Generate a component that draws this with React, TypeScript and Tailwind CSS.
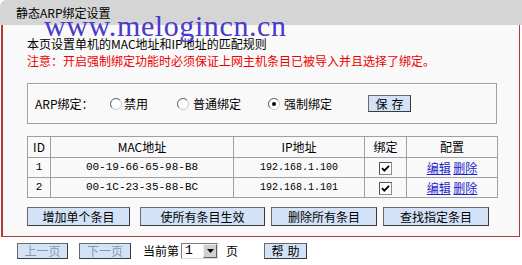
import React from 'react';

const cjk = "font-['Noto_Sans_CJK_SC',sans-serif]";

function Radio({ checked }: { checked?: boolean }) {
  return (
    <svg width="12" height="12" viewBox="0 0 12 12" className="shrink-0">
      <circle cx="6" cy="6" r="5.5" fill="#fff" stroke="#c8c8c8" />
      <path d="M2.1 9.9 A5.5 5.5 0 0 1 9.9 2.1" fill="none" stroke="#6a6a6a" />
      {checked && <circle cx="6" cy="6" r="2" fill="#000" />}
    </svg>
  );
}

function Check() {
  return (
    <svg width="13" height="13" viewBox="0 0 13 13" className="inline-block align-middle">
      <rect x="0.5" y="0.5" width="12" height="12" fill="#fff" stroke="#8c8c8c" />
      <path d="M0.5 12.5 V0.5 H12.5" fill="none" stroke="#555" />
      <path d="M3 6.2 L5.3 8.6 L10 3.8" fill="none" stroke="#000" strokeWidth="1.8" />
    </svg>
  );
}

function Btn({ children, className = '', disabled }: { children: React.ReactNode; className?: string; disabled?: boolean }) {
  return (
    <button
      className={`flex items-center justify-center bg-[#d4e2f7] border border-[#3a3a3a] border-l-[#6a6a6a] border-t-[#6a6a6a] text-[12px] leading-none ${disabled ? 'text-[#8a98ae]' : 'text-black'} ${className}`}
    >
      {children}
    </button>
  );
}

const rows = [
  { id: 1, mac: '00-19-66-65-98-B8', ip: '192.168.1.100' },
  { id: 2, mac: '00-1C-23-35-88-BC', ip: '192.168.1.101' },
];

export default function App() {
  return (
    <div className={`relative w-[522px] h-[265px] overflow-hidden bg-white text-[12px] text-black ${cjk}`}>
      <div className="h-[25px] bg-[#d5d5d5] rounded-tl-[6px] pl-[16px] leading-[25px]">静态ARP绑定设置</div>

      <div className="ml-[1px] w-[519px] bg-[#f9f9f9] border-l-2 border-r border-b border-[#b23a3a] pl-[24px] pt-[10px] pb-[10px]">
        <div className="leading-[17px]">本页设置单机的MAC地址和IP地址的匹配规则</div>
        <div className="leading-[17px] text-[#ee0000]">注意：开启强制绑定功能时必须保证上网主机条目已被导入并且选择了绑定。</div>

        <div className="mt-[14px] w-[470px] h-[41px] border border-[#a0a0a0] shadow-[inset_1px_1px_0_#fff] flex items-center pl-[7px]">
          <span className="w-[75px]">ARP绑定：</span>
          <span className="w-[67px] flex items-center gap-[2px]">
            <Radio />
            <span>禁用</span>
          </span>
          <span className="w-[91px] flex items-center gap-[4px]">
            <Radio />
            <span>普通绑定</span>
          </span>
          <span className="w-[100px] flex items-center gap-[4px]">
            <Radio checked />
            <span>强制绑定</span>
          </span>
          <Btn className="w-[43px] h-[17px] tracking-[4px] pl-[4px]">保存</Btn>
        </div>

        <table className="mt-[12px] w-[470px] border-collapse table-fixed border border-[#8c8c8c]">
          <colgroup>
            <col className="w-[23px]" />
            <col className="w-[183px]" />
            <col className="w-[131px]" />
            <col className="w-[42px]" />
            <col className="w-[91px]" />
          </colgroup>
          <thead>
            <tr className="h-[21px]">
              <th className="border border-[#a0a0a0] font-normal">ID</th>
              <th className="border border-[#a0a0a0] font-normal">MAC地址</th>
              <th className="border border-[#a0a0a0] font-normal">IP地址</th>
              <th className="border border-[#a0a0a0] font-normal">绑定</th>
              <th className="border border-[#a0a0a0] font-normal">配置</th>
            </tr>
          </thead>
          <tbody>
            {rows.map((r) => (
              <tr key={r.id} className="h-[20px]">
                <td className="border border-[#a0a0a0] text-center font-['Liberation_Mono',monospace] text-[11px]">{r.id}</td>
                <td className="border border-[#a0a0a0] text-center font-['Liberation_Mono',monospace] text-[11px]">{r.mac}</td>
                <td className="border border-[#a0a0a0] text-center font-['Liberation_Mono',monospace] text-[10px]">{r.ip}</td>
                <td className="border border-[#a0a0a0] text-center leading-none">
                  <Check />
                </td>
                <td className="border border-[#a0a0a0] text-center text-[#2424cc]">
                  <span className="underline">编辑</span> <span className="underline">删除</span>
                </td>
              </tr>
            ))}
          </tbody>
        </table>

        <div className="mt-[9px] flex">
          <Btn className="w-[103px] h-[19px]">增加单个条目</Btn>
          <Btn className="ml-[10px] w-[125px] h-[19px]">使所有条目生效</Btn>
          <Btn className="ml-[6px] w-[106px] h-[19px]">删除所有条目</Btn>
          <Btn className="ml-[6px] w-[106px] h-[19px]">查找指定条目</Btn>
        </div>
      </div>

      <div className="flex items-center pl-[17px] pt-[5px]">
        <Btn disabled className="w-[51px] h-[16px]">上一页</Btn>
        <Btn disabled className="ml-[11px] w-[52px] h-[16px]">下一页</Btn>
        <span className="ml-[12px]">当前第</span>
        <span className="ml-[2px] w-[37px] h-[16px] flex bg-white border border-[#7a7a7a] border-r-[#dcdcdc] border-b-[#dcdcdc]">
          <span className="flex-1 pl-[3px] leading-[14px] font-['Liberation_Mono',monospace] text-[13px]">1</span>
          <span className="w-[14px] h-[14px] flex items-center justify-center bg-[#d0d0d0] border border-[#f0f0f0] border-r-[#606060] border-b-[#606060]">
            <svg width="7" height="4" viewBox="0 0 7 4">
              <path d="M0 0 H7 L3.5 4 Z" fill="#000" />
            </svg>
          </span>
        </span>
        <span className="ml-[8px]">页</span>
        <Btn className="ml-[26px] w-[43px] h-[16px] tracking-[4px] pl-[4px]">帮助</Btn>
      </div>

      {/* watermark over the header */}
      <div className="absolute left-[44px] top-[11px] font-['Liberation_Serif',serif] text-[30px] leading-[30px] tracking-[0.6px] text-[#4a3acc]">
        www.melogincn.cn
      </div>
    </div>
  );
}
